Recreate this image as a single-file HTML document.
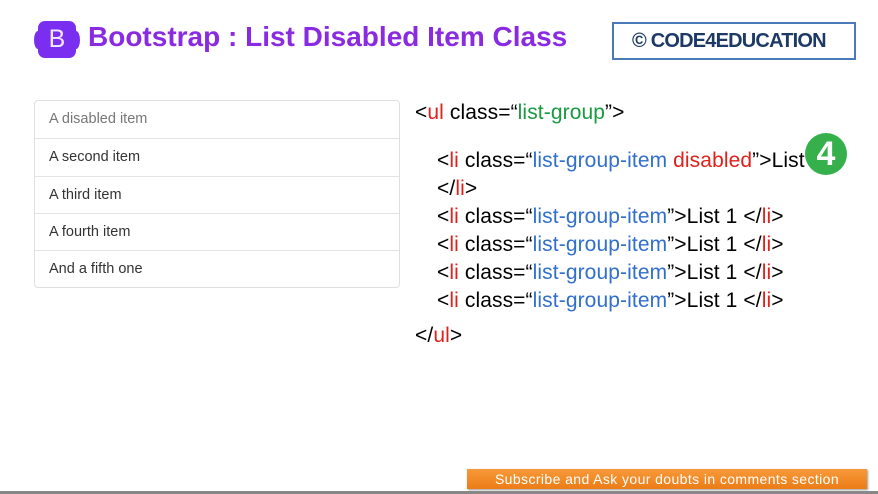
<!DOCTYPE html>
<html><head><meta charset="utf-8"><style>
body{margin:0;width:878px;height:494px;background:#fff;position:relative;overflow:hidden;font-family:"Liberation Sans",sans-serif}
.logo{position:absolute;left:38px;top:21px;width:38px;height:37px;background:#7a2ff0;border-radius:7px}
.logo span{position:absolute;left:0;right:0;top:4px;text-align:center;color:#f2eaff;font-size:25px}
.lb{position:absolute;top:31px;width:8px;height:18px;background:#7a2ff0;border-radius:50%}
h1{position:absolute;left:88px;top:21px;margin:0;font-size:28px;font-weight:bold;color:#8a2be2;letter-spacing:0}
.c4{position:absolute;left:612px;top:22px;width:244px;height:38px;border:2px solid #4a7ab8;box-sizing:border-box;font-size:20px;font-weight:bold;color:#1d3a66;padding:6px 0 0 18px;letter-spacing:-0.8px}
.list{position:absolute;left:34px;top:100px;width:364px;border:1px solid #dfdfdf;border-radius:4px}
.list div{height:37.3px;line-height:37px;padding-left:14px;font-size:14.5px;color:#333;border-top:1px solid #e4e4e4;box-sizing:border-box}
.list div:first-child{border-top:none;color:#777}
.code{position:absolute;font-size:21px;color:#000;white-space:nowrap;letter-spacing:0.1px}
.r{color:#e0201a}.g{color:#1a9a40}.b{color:#3070cc}
.sub{position:absolute;left:467px;top:469px;width:400px;height:20px;background:linear-gradient(#f79a3a,#ec7c16);color:#fff;font-size:14px;letter-spacing:0.4px;text-align:center;line-height:20px;box-shadow:1px 1px 2px #999}
.line{position:absolute;left:0;right:0;top:491px;height:3px;background:#888}
.badge{position:absolute;left:805px;top:133px;width:42px;height:42px;border-radius:50%;background:#35b04a;color:#fff;font-size:34px;font-weight:bold;text-align:center;line-height:42px}
</style></head><body>
<div class="lb" style="left:34px"></div><div class="lb" style="left:72px"></div>
<div class="logo"><span>B</span></div>
<h1>Bootstrap : List Disabled Item Class</h1>
<div class="c4">© CODE4EDUCATION</div>
<div class="list">
<div>A disabled item</div><div>A second item</div><div>A third item</div><div>A fourth item</div><div>And a fifth one</div>
</div>
<div class="code" style="left:415px;top:101px">&lt;<span class="r">ul</span> class=“<span class="g">list-group</span>”&gt;</div>
<div class="code" style="left:437px;top:149px">&lt;<span class="r">li</span> class=“<span class="b">list-group-item</span> <span class="r">disabled</span>”&gt;List</div>
<div class="code" style="left:437px;top:177px">&lt;/<span class="r">li</span>&gt;</div>
<div class="code" style="left:437px;top:205px">&lt;<span class="r">li</span> class=“<span class="b">list-group-item</span>”&gt;List 1 &lt;/<span class="r">li</span>&gt;</div>
<div class="code" style="left:437px;top:233px">&lt;<span class="r">li</span> class=“<span class="b">list-group-item</span>”&gt;List 1 &lt;/<span class="r">li</span>&gt;</div>
<div class="code" style="left:437px;top:261px">&lt;<span class="r">li</span> class=“<span class="b">list-group-item</span>”&gt;List 1 &lt;/<span class="r">li</span>&gt;</div>
<div class="code" style="left:437px;top:289px">&lt;<span class="r">li</span> class=“<span class="b">list-group-item</span>”&gt;List 1 &lt;/<span class="r">li</span>&gt;</div>
<div class="code" style="left:415px;top:324px">&lt;/<span class="r">ul</span>&gt;</div>
<div class="badge">4</div>
<div class="sub">Subscribe and Ask your doubts in comments section</div>
<div class="line"></div>
</body></html>
